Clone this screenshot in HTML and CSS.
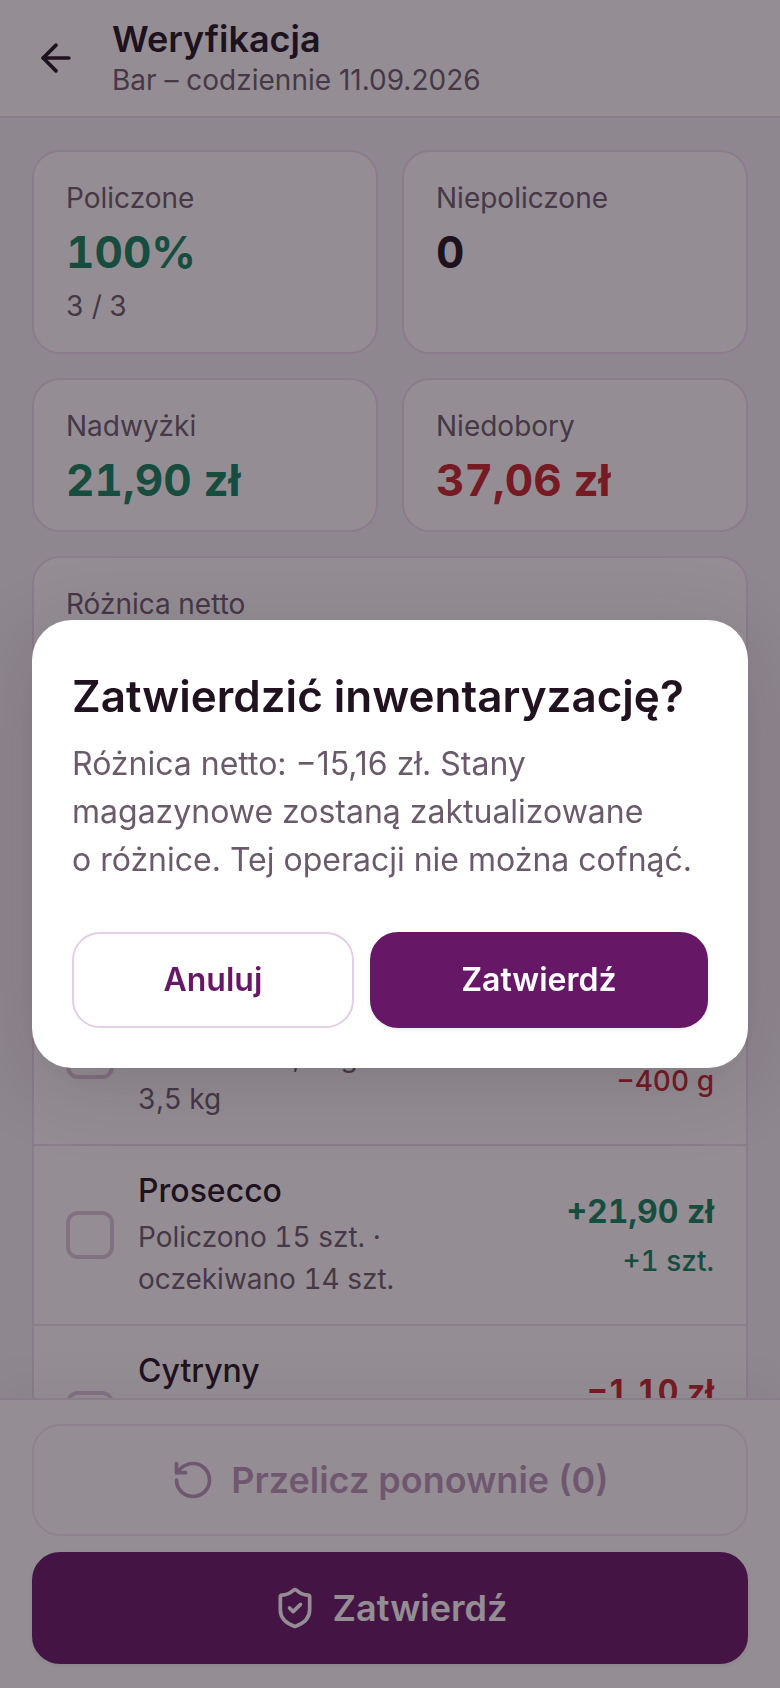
FILE: index.html
```html
<!DOCTYPE html>
<html lang="pl">
<head>
<meta charset="utf-8">
<meta name="viewport" content="width=device-width, initial-scale=1">
<title>Weryfikacja</title>
<link rel="stylesheet" href="styles.css">
</head>
<body>
<div class="app">
  <header class="topbar">
    <button class="back" type="button" aria-label="Wstecz">
      <svg class="icon" viewBox="0 0 24 24" aria-hidden="true"><path d="m12 19-7-7 7-7"/><path d="M19 12H5"/></svg>
    </button>
    <div class="topbar-text">
      <h1 class="topbar-title">Weryfikacja</h1>
      <p class="topbar-sub">Bar – codziennie 11.09.2026</p>
    </div>
  </header>

  <main class="content">
    <section class="stats">
      <div class="card">
        <p class="label">Policzone</p>
        <p class="value positive">100%</p>
        <p class="label">3 / 3</p>
      </div>
      <div class="card">
        <p class="label">Niepoliczone</p>
        <p class="value">0</p>
      </div>
      <div class="card">
        <p class="label">Nadwyżki</p>
        <p class="value positive">21,90 zł</p>
      </div>
      <div class="card">
        <p class="label">Niedobory</p>
        <p class="value negative">37,06 zł</p>
      </div>
      <div class="card wide">
        <p class="label">Różnica netto</p>
        <p class="value negative">−15,16 zł</p>
      </div>
      <div class="card wide">
        <p class="label">Pozycje z różnicą</p>
        <p class="value">3</p>
      </div>
    </section>

    <section class="differences">
      <h2 class="section-title">Różnice</h2>
      <ul class="list">
        <li>
          <label class="row">
            <input class="check" type="checkbox">
            <span class="row-main">
              <span class="row-name">Kawa ziarnista</span>
              <span class="row-detail">Policzono 3,1 kg · oczekiwano 3,5&nbsp;kg</span>
            </span>
            <span class="row-diff negative">
              <span class="diff-value">−35,96 zł</span>
              <span class="diff-amount">−400 g</span>
            </span>
          </label>
        </li>
        <li>
          <label class="row">
            <input class="check" type="checkbox">
            <span class="row-main">
              <span class="row-name">Prosecco</span>
              <span class="row-detail">Policzono 15 szt. · oczekiwano 14 szt.</span>
            </span>
            <span class="row-diff positive">
              <span class="diff-value">+21,90 zł</span>
              <span class="diff-amount">+1 szt.</span>
            </span>
          </label>
        </li>
        <li>
          <label class="row">
            <input class="check" type="checkbox">
            <span class="row-main">
              <span class="row-name">Cytryny</span>
              <span class="row-detail">Policzono 18 szt. · oczekiwano 19 szt.</span>
            </span>
            <span class="row-diff negative">
              <span class="diff-value">−1,10 zł</span>
              <span class="diff-amount">−1 szt.</span>
            </span>
          </label>
        </li>
      </ul>
    </section>
  </main>

  <footer class="actions">
    <button class="btn btn-outline btn-large" type="button" disabled>
      <svg class="icon" viewBox="0 0 24 24" aria-hidden="true"><path d="M3 12a9 9 0 1 0 9-9 9.75 9.75 0 0 0-6.74 2.74L3 8"/><path d="M3 3v5h5"/></svg>
      Przelicz ponownie (0)
    </button>
    <button class="btn btn-primary btn-large" type="button">
      <svg class="icon" viewBox="0 0 24 24" aria-hidden="true"><path d="M20 13c0 5-3.5 7.5-7.66 8.95a1 1 0 0 1-.67-.01C7.5 20.5 4 18 4 13V6a1 1 0 0 1 1-1c2 0 4.5-1.2 6.24-2.72a1.17 1.17 0 0 1 1.52 0C14.51 3.81 17 5 19 5a1 1 0 0 1 1 1z"/><path d="m9 12 2 2 4-4"/></svg>
      Zatwierdź
    </button>
  </footer>
</div>

<div class="overlay">
  <div class="modal" role="dialog" aria-modal="true" aria-labelledby="confirm-title" aria-describedby="confirm-text">
    <h2 class="modal-title" id="confirm-title">Zatwierdzić inwentaryzację?</h2>
    <p class="modal-text" id="confirm-text">Różnica netto: −15,16&nbsp;zł. Stany magazynowe zostaną zaktualizowane o&nbsp;różnice. Tej operacji nie można cofnąć.</p>
    <div class="modal-actions">
      <button class="btn btn-outline" type="button">Anuluj</button>
      <button class="btn btn-primary" type="button">Zatwierdź</button>
    </div>
  </div>
</div>
</body>
</html>
```
FILE: styles.css
```css
:root {
  --ink: #20121f;
  --muted: #6b5a6b;
  --brand: #661866;
  --line: #ebdceb;
  --line-strong: #e2cfe2;
  --check-line: #dbc8db;
  --surface: #ffffff;
  --page: #f4f1f6;
  --positive: #11835c;
  --negative: #c62329;
}

* {
  box-sizing: border-box;
}

body {
  margin: 0;
  font-family: Inter, "Liberation Sans", sans-serif;
  font-size: 28px;
  line-height: 42px;
  color: var(--ink);
  background: var(--page);
}

h1,
h2,
p,
ul {
  margin: 0;
  padding: 0;
}

button {
  font: inherit;
  color: inherit;
  cursor: pointer;
}

.app {
  display: flex;
  flex-direction: column;
  height: 100vh;
}

.icon {
  flex: none;
  width: 44px;
  height: 44px;
  fill: none;
  stroke: currentColor;
  stroke-width: 2;
  stroke-linecap: round;
  stroke-linejoin: round;
}

/* Header */

.topbar {
  display: flex;
  flex: none;
  align-items: flex-start;
  gap: 16px;
  padding: 16px;
  background: var(--surface);
  border-bottom: 2px solid var(--line);
}

.back {
  display: grid;
  place-items: center;
  width: 80px;
  height: 84px;
  padding: 0;
  background: none;
  border: 0;
}

.topbar-title {
  font-size: 36px;
  font-weight: 600;
  line-height: 46px;
}

.topbar-sub {
  line-height: 36px;
  color: var(--muted);
}

/* Content */

.content {
  flex: 1;
  min-height: 0;
  padding: 32px;
  overflow-y: auto;
  scrollbar-width: none;
}

.stats {
  display: grid;
  grid-template-columns: 1fr 1fr;
  gap: 24px;
}

.card {
  display: flex;
  flex-direction: column;
  gap: 6px;
  padding: 24px 32px;
  background: var(--surface);
  border: 2px solid var(--line);
  border-radius: 28px;
  font-variant-numeric: tabular-nums;
}

.wide {
  grid-column: 1 / -1;
}

.label {
  line-height: 44px;
  color: var(--muted);
}

.value {
  font-size: 44px;
  font-weight: 700;
  line-height: 52px;
}

.positive {
  color: var(--positive);
}

.negative {
  color: var(--negative);
}

.differences {
  display: flex;
  flex-direction: column;
  gap: 8px;
  margin-top: 24px;
}

.section-title {
  font-size: 32px;
  font-weight: 600;
  line-height: 44px;
}

.list {
  list-style: none;
  background: var(--surface);
  border: 2px solid var(--line);
  border-radius: 28px;
  font-variant-numeric: tabular-nums;
}

.list li + li {
  border-top: 2px solid var(--line);
}

.row {
  display: flex;
  align-items: center;
  gap: 24px;
  padding: 24px 32px;
}

.check {
  flex: none;
  width: 48px;
  height: 48px;
  margin: 0;
  appearance: none;
  background: var(--surface);
  border: 4px solid var(--check-line);
  border-radius: 12px;
}

.check:checked {
  background: var(--brand);
  border-color: var(--brand);
}

.row-main,
.row-diff {
  display: flex;
  flex-direction: column;
  gap: 4px;
}

.row-main {
  flex: 1;
  min-width: 0;
}

.row-name {
  font-size: 32px;
  font-weight: 500;
}

.row-detail {
  color: var(--muted);
}

.row-diff {
  flex: none;
  text-align: right;
}

.diff-value {
  font-size: 32px;
  font-weight: 700;
  line-height: 48px;
}

.diff-amount {
  font-weight: 500;
}

/* Buttons */

.btn {
  display: flex;
  align-items: center;
  justify-content: center;
  gap: 16px;
  height: 96px;
  padding: 0 32px;
  border: 2px solid transparent;
  border-radius: 28px;
  font-size: 32px;
  font-weight: 600;
}

.btn-large {
  height: 112px;
  font-size: 36px;
}

.btn-outline {
  color: var(--brand);
  background: var(--surface);
  border-color: var(--line-strong);
}

.btn-primary {
  color: var(--surface);
  background: var(--brand);
  border-color: var(--brand);
  box-shadow: 0 2px 4px rgba(32, 18, 31, 0.08);
}

.btn:disabled {
  opacity: 0.45;
  cursor: default;
}

.actions {
  position: relative;
  display: flex;
  flex: none;
  flex-direction: column;
  gap: 16px;
  padding: 24px 32px;
  background: var(--surface);
  border-top: 2px solid var(--line);
  box-shadow: 0 -8px 48px rgba(32, 18, 31, 0.06);
}

/* Dialog */

.overlay {
  position: fixed;
  inset: 0;
  display: grid;
  grid-template-columns: minmax(0, 800px);
  place-content: center;
  padding: 32px;
  background: rgba(32, 18, 31, 0.48);
}

.modal {
  padding: 40px;
  background: var(--surface);
  border-radius: 40px;
  box-shadow: 0 16px 80px rgba(32, 18, 31, 0.18);
}

.modal-title {
  margin-bottom: 8px;
  font-size: 44px;
  font-weight: 600;
  line-height: 72px;
}

.modal-text {
  font-size: 32px;
  line-height: 48px;
  color: var(--muted);
}

.modal-actions {
  display: grid;
  grid-template-columns: 5fr 6fr;
  gap: 16px;
  margin-top: 48px;
}
```
